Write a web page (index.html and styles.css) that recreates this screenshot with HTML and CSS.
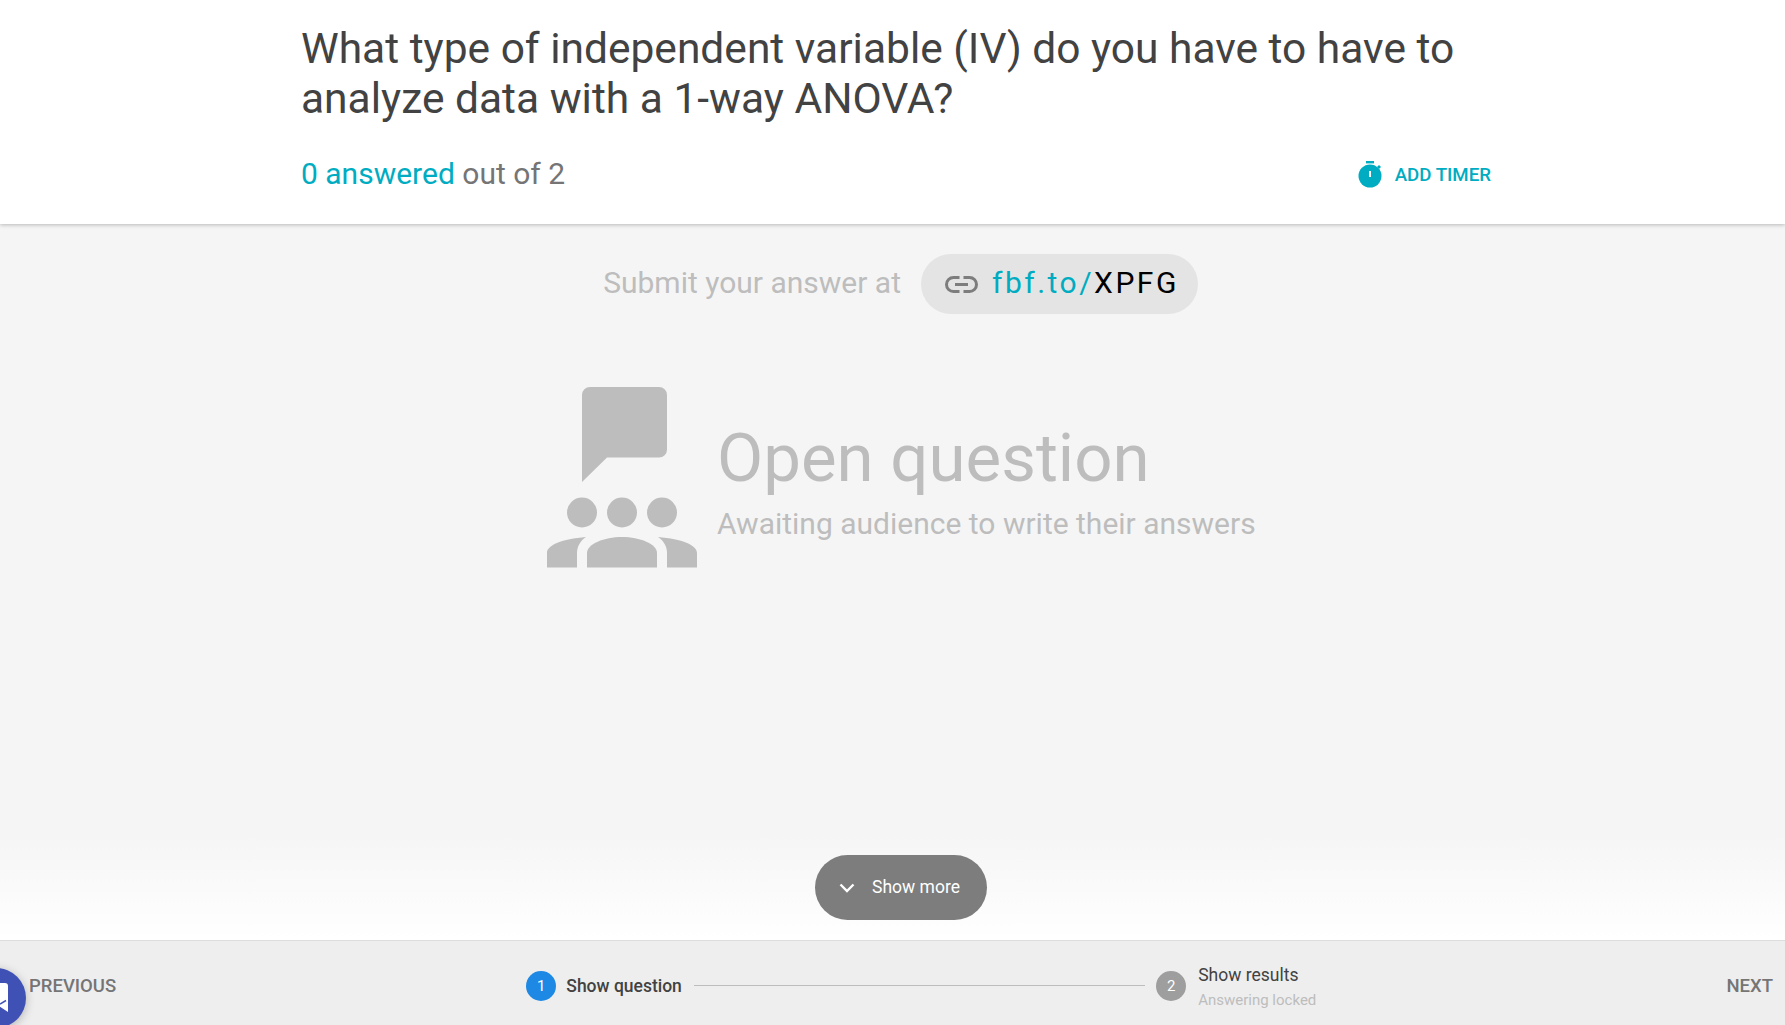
FILE: index.html
```html
<!DOCTYPE html>
<html lang="en">
<head>
    <meta charset="UTF-8">
    <title>Open question</title>
    <link rel="stylesheet" href="styles.css">
</head>
<body>
    <header class="top">
        <h1 class="question">What type of independent variable (IV) do you have to have to analyze data with a 1-way ANOVA?</h1>
        <div class="top-row">
            <div class="count"><span class="accent">0 answered</span> out of 2</div>
            <button class="timer">
                <svg class="timer-icon" viewBox="0 0 24 27" width="24" height="27"><rect x="8" y="0" width="8" height="2.4" fill="#00acc1"/><circle cx="12" cy="15" r="11.5" fill="#00acc1"/><path d="M19 6l2-2 2 2-2 2z" fill="#00acc1"/><rect x="11" y="10" width="2" height="6" fill="#fff"/></svg>
                <span class="timer-label">ADD TIMER</span>
            </button>
        </div>
    </header>

    <main class="stage">
        <div class="submit-row">
            <span class="submit-label">Submit your answer at</span>
            <div class="pill">
                <svg class="link-icon" viewBox="0 0 33 17" width="33" height="17"><path d="M14.500 1.500H8.500a7 7 0 0 0 0 14h6M18.500 1.500h6a7 7 0 0 1 0 14h-6M10 8.500h13" fill="none" stroke="#7d7d7d" stroke-width="3"/></svg>
                <span class="link-text"><span class="accent">fbf.to/</span>XPFG</span>
            </div>
        </div>
        <div class="status">
            <svg class="status-icon" viewBox="0 0 150 181" width="150" height="181">
                <path d="M43 0h69a8 8 0 0 1 8 8v54.600a8 8 0 0 1-8 8H60L35 95V8a8 8 0 0 1 8-8z" fill="#bdbdbd"/>
                <circle cx="35" cy="125.500" r="15" fill="#bdbdbd"/>
                <circle cx="75" cy="125.500" r="15" fill="#bdbdbd"/>
                <circle cx="115" cy="125.500" r="15" fill="#bdbdbd"/>
                <path d="M40 180.500V166c0-9 17-16 35-16s35 7 35 16v14.500z" fill="#bdbdbd"/>
                <path d="M0 180.500V166c0-8 15-14 39-16-6 4-9 10-9 16v14.500z" fill="#bdbdbd"/>
                <path d="M150 180.500V166c0-8-15-14-39-16 6 4 9 10 9 16v14.500z" fill="#bdbdbd"/>
            </svg>
            <div class="status-text">
                <div class="status-title">Open question</div>
                <div class="status-sub">Awaiting audience to write their answers</div>
            </div>
        </div>
        <div class="more-wrap">
            <button class="more">
                <svg viewBox="0 0 16 10" width="16" height="10"><path d="M1.500 1.500L8 8l6.500-6.500" fill="none" stroke="#fff" stroke-width="2.400"/></svg>
                <span class="more-label">Show more</span>
            </button>
        </div>
    </main>

    <footer class="bottom">
        <span class="nav nav-prev">PREVIOUS</span>
        <div class="steps">
            <div class="step step-first">
                <span class="dot dot-active">1</span>
                <span class="step-name step-current">Show question</span>
            </div>
            <div class="step-line"></div>
            <div class="step">
                <span class="dot">2</span>
                <div class="step-text">
                    <div class="step-name">Show results</div>
                    <div class="step-note">Answering locked</div>
                </div>
            </div>
        </div>
        <span class="nav">NEXT</span>
    </footer>

    <div class="chat-bubble">
        <svg viewBox="0 0 40 40" width="40" height="40"><path d="M8 5h21a3 3 0 0 1 3 3v26l-9-6H8z" fill="#fff"/><path d="M24 26l6-3.500" fill="none" stroke="#3f51b5" stroke-width="1.500"/></svg>
    </div>
</body>
</html>
```

FILE: styles.css
```css
* {
    box-sizing: border-box;
}
html, body {
    height: 100%;
}
body {
    margin: 0;
    display: flex;
    flex-direction: column;
    height: 100vh;
    overflow: hidden;
    font-family: Roboto, sans-serif;
    background: #f5f5f5;
    position: relative;
}
button {
    font-family: inherit;
    border: none;
    cursor: pointer;
}
.accent {
    color: #00acc1;
}

.top {
    height: 224px;
    padding: 24px 294px 0 301px;
    background: #fff;
    box-shadow: 0 1px 4px rgba(0, 0, 0, 0.25);
    position: relative;
    z-index: 1;
}
.question {
    margin: 0;
    font-size: 42.500px;
    line-height: 50px;
    font-weight: 400;
    color: #424242;
}
.top-row {
    display: flex;
    justify-content: space-between;
    align-items: center;
    margin-top: 30px;
}
.count {
    font-size: 30px;
    line-height: 40px;
    color: #757575;
}
.timer {
    display: flex;
    align-items: center;
    gap: 13px;
    padding: 0;
    background: none;
    color: #00acc1;
    font-size: 18.700px;
    font-weight: 500;
}
.timer-label {
    padding-top: 1px;
}

.stage {
    flex: 1;
    display: flex;
    flex-direction: column;
    background: linear-gradient(to bottom, #f5f5f5 0, #f5f5f5 610px, #fff 716px);
}
.submit-row {
    display: flex;
    align-items: center;
    justify-content: center;
    gap: 20px;
    margin-top: 30px;
    padding-left: 16px;
}
.submit-label {
    font-size: 30px;
    line-height: 34px;
    margin-top: -2px;
    color: #bdbdbd;
}
.pill {
    display: flex;
    align-items: center;
    gap: 14px;
    height: 60px;
    padding: 0 19px 0 24px;
    border-radius: 30px;
    background: #e4e4e4;
}
.link-text {
    font-size: 30px;
    line-height: 34px;
    margin-top: -2px;
    letter-spacing: 2.500px;
    color: #000;
}
.status {
    display: flex;
    align-items: center;
    margin: 73px 0 0 547px;
}
.status-text {
    margin-left: 20px;
    padding-top: 3px;
}
.status-title {
    font-size: 67.200px;
    line-height: 84px;
    color: #bdbdbd;
}
.status-sub {
    font-size: 30px;
    line-height: 38px;
    margin-top: 5px;
    color: #bdbdbd;
}
.more-wrap {
    display: flex;
    justify-content: center;
    margin-top: auto;
    padding: 0 0 20px 17px;
}
.more {
    display: flex;
    align-items: center;
    gap: 17px;
    height: 65px;
    padding: 0 27px 0 24px;
    border-radius: 33px;
    background: #7d7d7d;
    color: #fff;
    font-size: 17.500px;
}
.more-label {
    margin-top: -2px;
}

.bottom {
    height: 85px;
    display: flex;
    align-items: center;
    justify-content: space-between;
    padding: 5px 12px 0 29px;
    background: #eee;
    border-top: 1px solid #ddd;
}
.nav {
    font-size: 18.500px;
    font-weight: 500;
    color: #757575;
}
.steps {
    display: flex;
    align-items: center;
    width: 790px;
}
.step {
    display: flex;
    align-items: center;
    gap: 12px;
}
.step-first {
    gap: 10px;
}
.step-text {
    margin-top: 2px;
}
.step-line {
    flex: 1;
    height: 1px;
    margin: 0 11px 0 12px;
    background: #bdbdbd;
}
.dot {
    width: 30px;
    height: 30px;
    flex: none;
    border-radius: 50%;
    display: flex;
    align-items: center;
    justify-content: center;
    background: #9e9e9e;
    color: #fff;
    font-size: 15px;
}
.dot-active {
    background: #1e88e5;
}
.step-name {
    font-size: 17.500px;
    line-height: 24px;
    color: #424242;
}
.step-current {
    font-weight: 500;
}
.step-note {
    font-size: 15px;
    line-height: 20px;
    margin-top: 3px;
    color: #bdbdbd;
}

.chat-bubble {
    position: absolute;
    left: -34px;
    bottom: -3px;
    width: 60px;
    height: 60px;
    border-radius: 50%;
    background: #3f51b5;
    box-shadow: 0 2px 10px rgba(0, 0, 0, 0.25);
    display: flex;
    align-items: center;
    justify-content: center;
}
```
